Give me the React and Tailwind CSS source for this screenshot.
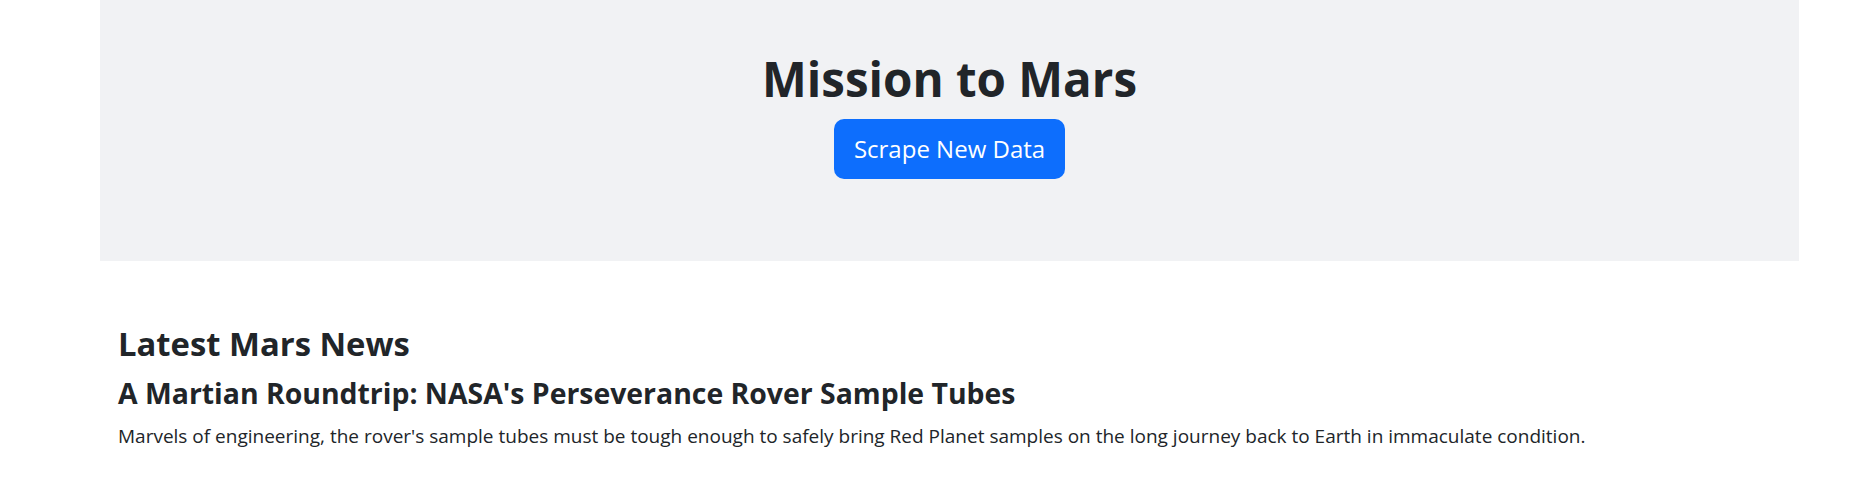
export default function App() {
  return (
    <div className="min-h-screen bg-white text-[#212529] font-['Open_Sans',sans-serif]">
      <div className="ml-[100px] w-[1699px]">
        {/* Jumbotron */}
        <div className="h-[261px] bg-[#f1f2f4] pt-[49px] flex flex-col items-center">
          <h1 className="text-[47.5px] leading-[60px] font-bold mb-[10px]">Mission to Mars</h1>
          <button className="h-[60px] px-[20px] rounded-[10px] bg-[#0d6efd] text-white text-[24px] leading-[1.5]">
            Scrape New Data
          </button>
        </div>

        {/* News */}
        <div className="mt-[62px] pl-[18px]">
          <h3 className="text-[32.8px] leading-[42px] font-bold mb-[10px]">Latest Mars News</h3>
          <h4 className="text-[28.4px] leading-[36px] font-bold mb-[10px]">
            A Martian Roundtrip: NASA's Perseverance Rover Sample Tubes
          </h4>
          <p className="text-[19px] leading-[30px]">
            Marvels of engineering, the rover's sample tubes must be tough enough to safely bring Red Planet samples on the long journey back to Earth in immaculate condition.
          </p>
        </div>
      </div>
    </div>
  );
}
